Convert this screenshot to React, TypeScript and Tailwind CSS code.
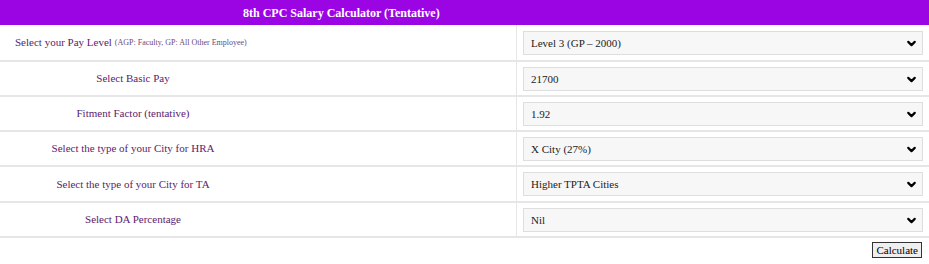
import { ChevronDown } from "lucide-react";

const rows = [
  { label: "Select Basic Pay", value: "21700", h: "h-[35px]" },
  { label: "Fitment Factor (tentative)", value: "1.92", h: "h-[35px]" },
  { label: "Select the type of your City for HRA", value: "X City (27%)", h: "h-[35px]" },
  { label: "Select the type of your City for TA", value: "Higher TPTA Cities", h: "h-[36px]" },
  { label: "Select DA Percentage", value: "Nil", h: "h-[35px]" },
];

function FakeSelect({ value }: { value: string }) {
  return (
    <div className="flex h-[24px] items-center justify-between border border-[#dedede] bg-[#f7f7f7] pl-[7px] pr-[4px] text-[11px] text-[#222]">
      <span>{value}</span>
      <ChevronDown className="h-[13px] w-[13px] text-black" strokeWidth={4} />
    </div>
  );
}

export default function App() {
  return (
    <div className="w-[929px] bg-white font-['Liberation_Serif',serif]">
      <div className="flex h-[25px] items-center bg-[#9b05e3] pl-[243px] text-[12px] font-bold text-white">
        8th CPC Salary Calculator (Tentative)
      </div>
      <div className="flex h-[37px] border-b-2 border-[#e6e6e6]">
        <div className="flex w-[517px] items-center border-r border-[#e6e6e6] pl-[15px] text-[11px] text-[#5b1c6b]">
          Select your Pay Level
          <span className="ml-[3px] text-[8px] text-[#6b4a78]">(AGP: Faculty, GP: All Other Employee)</span>
        </div>
        <div className="flex-1 px-[6px] pt-[6px]">
          <FakeSelect value="Level 3 (GP – 2000)" />
        </div>
      </div>
      {rows.map((r) => (
        <div key={r.label} className={`flex ${r.h} border-b-2 border-[#e6e6e6]`}>
          <div className="flex w-[517px] items-center border-r border-[#e6e6e6] text-[11px] text-[#5b1c6b]">
            <div className="w-[266px] text-center">{r.label}</div>
          </div>
          <div className="flex-1 px-[6px] pt-[5px]">
            <FakeSelect value={r.value} />
          </div>
        </div>
      ))}
      <div className="flex justify-end pr-[7px] pt-[4px]">
        <button className="h-[16px] border border-[#333] bg-[#efefef] px-[3px] text-[11px] leading-none text-black">
          Calculate
        </button>
      </div>
    </div>
  );
}
